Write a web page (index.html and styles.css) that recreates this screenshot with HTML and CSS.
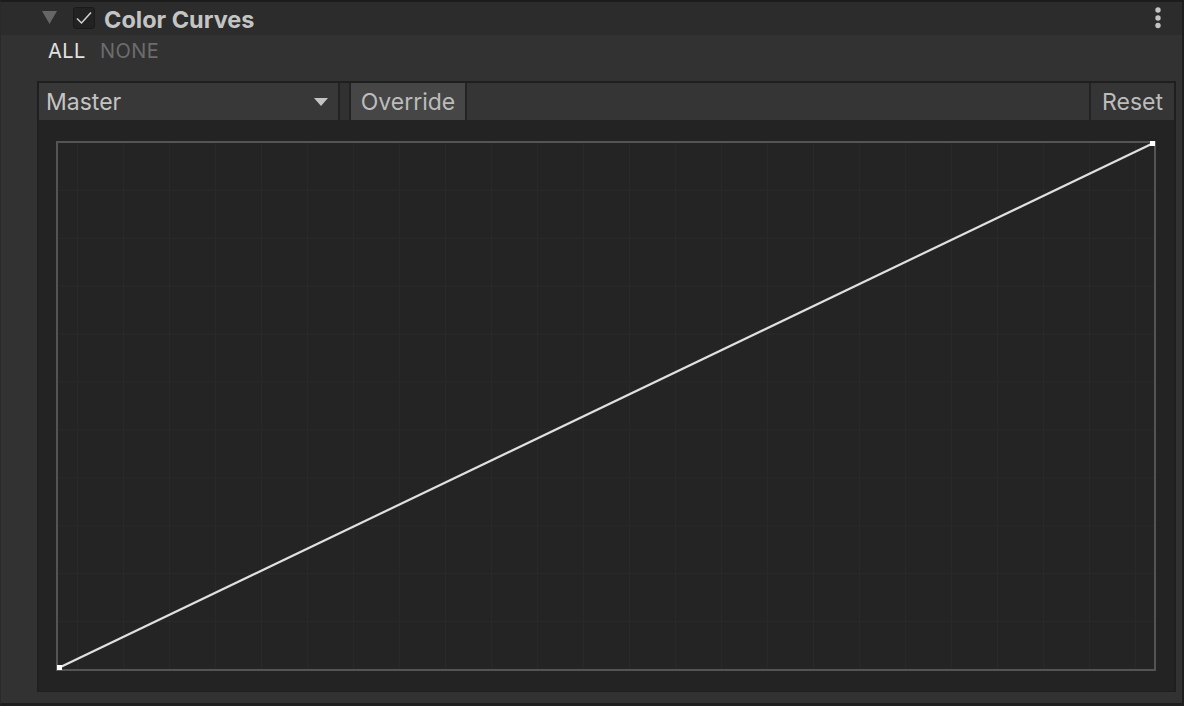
FILE: index.html
```html
<!DOCTYPE html>
<html>
<head>
<meta charset="utf-8">
<link rel="stylesheet" href="styles.css">
</head>
<body>
<div class="root">
  <div class="header">
    <svg class="foldout" width="16" height="14" viewBox="0 0 16 14"><polygon points="0,0 15,0 7.5,13" fill="#666666"/></svg>
    <div class="checkbox">
      <svg width="18" height="16" viewBox="0 0 18 16"><polyline points="2,8.5 6.5,13 16,2.5" fill="none" stroke="#d4d4d4" stroke-width="1.5"/></svg>
    </div>
    <div class="title">Color Curves</div>
    <svg class="kebab" width="8" height="22" viewBox="0 0 8 22"><circle cx="4" cy="3" r="2.7" fill="#c4c4c4"/><circle cx="4" cy="11" r="2.7" fill="#c4c4c4"/><circle cx="4" cy="18.5" r="2.7" fill="#c4c4c4"/></svg>
  </div>
  <div class="toggles">
    <span class="all">ALL</span>
    <span class="none">NONE</span>
  </div>
  <div class="panel">
    <div class="toolbar">
      <div class="dropdown">
        <span>Master</span>
        <svg width="14" height="9" viewBox="0 0 14 9"><polygon points="0,0 14,0 7,8" fill="#c4c4c4"/></svg>
      </div>
      <div class="spacer"></div>
      <div class="btn override">Override</div>
      <div class="fill"></div>
      <div class="btn reset">Reset</div>
    </div>
    <div class="curve-wrap">
      <div class="curve">
        <svg class="curve-svg" width="1096" height="526" viewBox="0 0 1096 526">
          <line x1="1.5" y1="524.5" x2="1094.5" y2="0.5" stroke="#e0e0e0" stroke-width="2.2"/>
          <rect x="-1" y="522" width="5" height="5" fill="#ffffff"/>
          <rect x="1092" y="-2" width="5" height="5" fill="#ffffff"/>
        </svg>
      </div>
    </div>
  </div>
</div>
</body>
</html>
```
FILE: styles.css
```css
* { box-sizing: border-box; }
html, body { margin: 0; padding: 0; }
body {
  width: 1184px;
  height: 706px;
  background: #323232;
  font-family: Inter, "Noto Sans", sans-serif;
  overflow: hidden;
}
.root {
  width: 1184px;
  height: 706px;
  border-top: 2px solid #1c1c1c;
  border-right: 2px solid #1e1e1e;
  border-bottom: 3px solid #1e1e1e;
  border-left: 1px solid #2a2a2a;
  background: #323232;
  display: flex;
  flex-direction: column;
}
.header {
  height: 33px;
  background: #2c2c2c;
  display: flex;
  align-items: center;
  padding-left: 41px;
  padding-right: 20px;
  flex-shrink: 0;
}
.foldout { margin-top: -2px; }
.checkbox {
  width: 22px;
  height: 22px;
  margin-left: 15px;
  background: #222222;
  border: 1px solid #1a1a1a;
  border-radius: 3px;
  display: flex;
  align-items: center;
  justify-content: center;
  margin-top: -1px;
}
.title {
  margin-left: 9px;
  margin-top: 2px;
  font-size: 23.5px;
  font-weight: 700;
  color: #c4c4c4;
  flex: 1;
}
.kebab { margin-top: -1px; }
.toggles {
  height: 46px;
  display: flex;
  align-items: flex-start;
  padding-left: 47px;
  padding-top: 4px;
  gap: 14px;
  font-size: 20px;
  letter-spacing: 0.5px;
  flex-shrink: 0;
}
.all { color: #e2e2e2; }
.none { color: #6c6c6c; }
.panel {
  margin-left: 36px;
  margin-right: 6px;
  height: 611px;
  border-top: 2px solid #1f1f1f;
  border-left: 2px solid #1f1f1f;
  border-right: 2px solid #1f1f1f;
  border-bottom: 1px solid #1f1f1f;
  background: #232323;
  display: flex;
  flex-direction: column;
}
.toolbar {
  height: 37px;
  display: flex;
  background: #353535;
  flex-shrink: 0;
}
.dropdown {
  width: 301px;
  background: #383838;
  border-right: 2px solid #232323;
  display: flex;
  align-items: center;
  justify-content: space-between;
  padding-left: 7px;
  padding-right: 10px;
  font-size: 23px;
  color: #c4c4c4;
}
.dropdown svg { margin-top: 1px; }
.spacer {
  width: 11px;
  background: #313131;
  border-right: 2px solid #232323;
}
.btn {
  display: flex;
  align-items: center;
  justify-content: center;
  font-size: 23px;
  color: #bcbcbc;
}
.override {
  width: 116px;
  background: #464646;
  border-right: 2px solid #232323;
}
.fill { flex: 1; background: #353535; }
.reset {
  width: 85px;
  background: #353535;
  border-left: 2px solid #232323;
}
.curve-wrap {
  flex: 1;
  padding: 21px 18px 19px 17px;
}
.curve {
  width: 1100px;
  height: 530px;
  border: 2px solid #545454;
  background-color: #242424;
  background-image:
    linear-gradient(to right, #292929 1px, transparent 1px),
    linear-gradient(to bottom, #292929 1px, transparent 1px);
  background-size: 46px 47.9px;
  background-position: 19px -1px;
}
.curve-svg { display: block; overflow: visible; }
```
